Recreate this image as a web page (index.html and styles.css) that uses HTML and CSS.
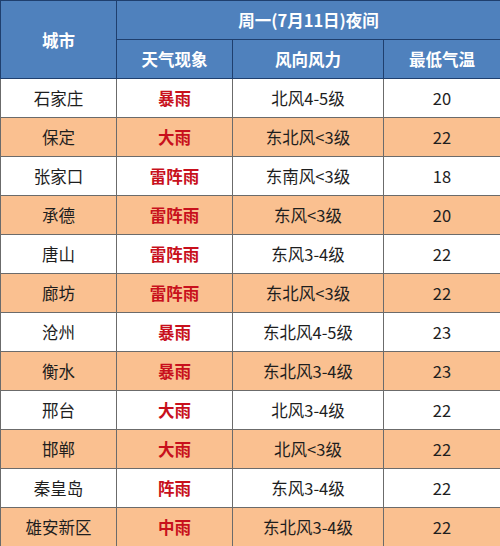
FILE: index.html
```html
<!DOCTYPE html>
<html lang="zh">
<head>
<meta charset="utf-8">
<link rel="stylesheet" href="styles.css">
</head>
<body>
<table class="weather">
  <colgroup>
    <col class="c1"><col class="c2"><col class="c3"><col class="c4">
  </colgroup>
  <thead>
    <tr>
      <th rowspan="2" class="city-h">城市</th>
      <th colspan="3">周一(7月11日)夜间</th>
    </tr>
    <tr>
      <th>天气现象</th>
      <th>风向风力</th>
      <th>最低气温</th>
    </tr>
  </thead>
  <tbody>
    <tr><td>石家庄</td><td class="wx">暴雨</td><td>北风4-5级</td><td>20</td></tr>
    <tr class="alt"><td>保定</td><td class="wx">大雨</td><td>东北风&lt;3级</td><td>22</td></tr>
    <tr><td>张家口</td><td class="wx">雷阵雨</td><td>东南风&lt;3级</td><td>18</td></tr>
    <tr class="alt"><td>承德</td><td class="wx">雷阵雨</td><td>东风&lt;3级</td><td>20</td></tr>
    <tr><td>唐山</td><td class="wx">雷阵雨</td><td>东风3-4级</td><td>22</td></tr>
    <tr class="alt"><td>廊坊</td><td class="wx">雷阵雨</td><td>东北风&lt;3级</td><td>22</td></tr>
    <tr><td>沧州</td><td class="wx">暴雨</td><td>东北风4-5级</td><td>23</td></tr>
    <tr class="alt"><td>衡水</td><td class="wx">暴雨</td><td>东北风3-4级</td><td>23</td></tr>
    <tr><td>邢台</td><td class="wx">大雨</td><td>北风3-4级</td><td>22</td></tr>
    <tr class="alt"><td>邯郸</td><td class="wx">大雨</td><td>北风&lt;3级</td><td>22</td></tr>
    <tr><td>秦皇岛</td><td class="wx">阵雨</td><td>东风3-4级</td><td>22</td></tr>
    <tr class="alt"><td>雄安新区</td><td class="wx">中雨</td><td>东北风3-4级</td><td>22</td></tr>
  </tbody>
</table>
</body>
</html>
```
FILE: styles.css
```css
html, body {
  margin: 0;
  padding: 0;
  background: #ffffff;
}
.weather {
  width: 500px;
  border-collapse: collapse;
  table-layout: fixed;
  font-family: "Noto Sans CJK SC", "Noto Sans", sans-serif;
  font-size: 16.5px;
  color: #1e1e1e;
}
.c1 { width: 116px; }
.c2 { width: 116px; }
.c3 { width: 151px; }
.c4 { width: 117px; }
.weather th,
.weather td {
  height: 39px;
  padding: 0;
  text-align: center;
  vertical-align: middle;
  line-height: 20px;
  box-sizing: border-box;
}
.weather th {
  background: #4f81bd;
  color: #ffffff;
  font-weight: bold;
  border: 1px solid #1f3f6e;
}
.weather td {
  border: 1px solid #6b6b6b;
}
.weather tr.alt td {
  background: #fac090;
}
.weather td.wx {
  color: #c8101c;
  font-weight: bold;
}
```
